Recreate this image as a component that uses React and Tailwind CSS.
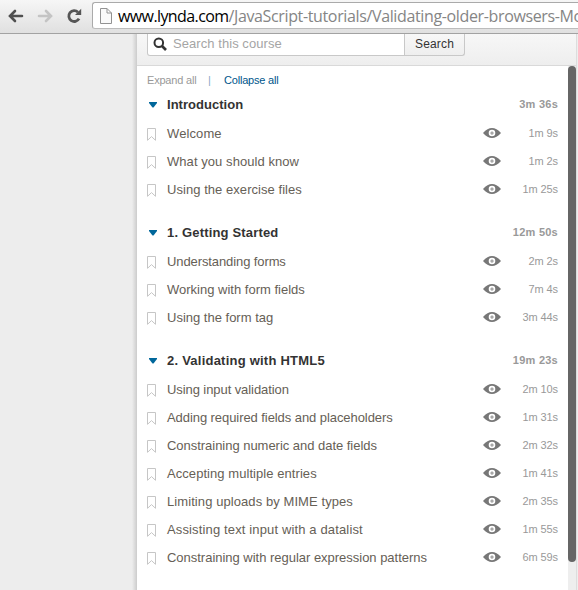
const sections = [
  {
    title: 'Introduction', time: '3m 36s', tracking: 'tracking-[0.03px]',
    items: [
      ['Welcome', '1m 9s', 'tracking-[0.1px]'],
      ['What you should know', '1m 2s', 'tracking-[0.06px]'],
      ['Using the exercise files', '1m 25s', 'tracking-[0.05px]'],
    ],
  },
  {
    title: '1. Getting Started', time: '12m 50s', tracking: 'tracking-[0.17px]',
    items: [
      ['Understanding forms', '2m 2s', 'tracking-[-0.1px]'],
      ['Working with form fields', '7m 4s', 'tracking-[0px]'],
      ['Using the form tag', '3m 44s', 'tracking-[0px]'],
    ],
  },
  {
    title: '2. Validating with HTML5', time: '19m 23s', tracking: 'tracking-[0.23px]',
    items: [
      ['Using input validation', '2m 10s', 'tracking-[-0.08px]'],
      ['Adding required fields and placeholders', '1m 31s', 'tracking-[-0.07px]'],
      ['Constraining numeric and date fields', '2m 32s', 'tracking-[-0.03px]'],
      ['Accepting multiple entries', '1m 41s', 'tracking-[0.06px]'],
      ['Limiting uploads by MIME types', '2m 35s', 'tracking-[0.08px]'],
      ['Assisting text input with a datalist', '1m 55s', 'tracking-[0.14px]'],
      ['Constraining with regular expression patterns', '6m 59s', 'tracking-[-0.02px]'],
    ],
  },
];

function Arrow({ className }) {
  return (
    <svg className={className} width="16" height="14" viewBox="0 0 16 14" fill="none" stroke="currentColor" strokeWidth="2.6" strokeLinecap="round">
      <path d="M7 2 L2 7 L7 12 M2.5 7 H14" />
    </svg>
  );
}

function Reload() {
  return (
    <svg width="16" height="16" viewBox="0 0 16 16" className="ml-[13px] shrink-0 text-[#555]">
      <path d="M12 4.2 A5.4 5.4 0 1 0 13 10.6" fill="none" stroke="currentColor" strokeWidth="2.8" />
      <path d="M15.2 0.8 V7 H9 Z" fill="currentColor" />
    </svg>
  );
}

function Toolbar() {
  return (
    <header className="flex h-[34px] shrink-0 items-start border-b border-[#a2a2a2] bg-gradient-to-b from-[#f6f6f6] to-[#e0e0e0] pl-[8px] pt-[2px]">
      <div className="flex h-[27px] shrink-0 items-center">
        <Arrow className="text-[#505050]" />
        <Arrow className="ml-[13px] rotate-180 text-[#c4c4c4]" />
        <Reload />
      </div>
      <div className="ml-[10px] flex h-[27px] min-w-0 flex-1 items-center overflow-hidden rounded-l-[3px] border border-r-0 border-[#aaa] border-b-[#bcbcbc] bg-white pl-[7px]">
        <svg width="12" height="16" viewBox="0 0 12 16" fill="#fafafa" stroke="#929292" className="shrink-0">
          <path d="M0.5 0.5 H7 L11.5 5 V15.5 H0.5 Z M7 0.5 V5 H11.5" />
        </svg>
        <span className="ml-[6px] whitespace-nowrap font-['Open_Sans',sans-serif] text-[16px] leading-[24px] tracking-[-0.36px] text-[#858585]">
          <span className="tracking-[-0.6px] text-black">www.lynda.com</span>/JavaScript-tutorials/Validating-older-browsers-Mo
        </span>
      </div>
    </header>
  );
}

function SearchHeader() {
  return (
    <div className="flex h-[32px] shrink-0 items-start border-b border-[#d9d9d9] bg-gradient-to-b from-[#f7f7f7] to-[#eeeeee] pl-[10px]">
      <div className="flex h-[22px] w-[258px] items-center rounded-bl-[3px] border border-t-0 border-[#c8c8c8] bg-white pl-[5px]">
        <svg width="14" height="14" viewBox="0 0 14 14" fill="none" stroke="#333" className="mt-[-2px]">
          <circle cx="5.8" cy="5.8" r="4.3" strokeWidth="2" />
          <path d="M9 9 L13 13" strokeWidth="2.6" />
        </svg>
        <span className="ml-[6px] mt-[-2px] text-[13px] leading-[16px] tracking-[0.06px] text-[#a5a5a5]">Search this course</span>
      </div>
      <button className="h-[22px] w-[60px] rounded-br-[3px] border border-l-0 border-t-0 border-[#c8c8c8] bg-gradient-to-b from-[#f8f8f8] to-[#eeeeee] pb-[2px] text-[12px] leading-[16px] tracking-[0.15px] text-[#333]">Search</button>
    </div>
  );
}

function Bookmark() {
  return (
    <svg width="9" height="13" viewBox="0 0 9 13" fill="white" stroke="#c6c6c6" className="mt-[3px] shrink-0">
      <path d="M0.5 0.5 H8.5 V12.3 L4.5 8.6 L0.5 12.3 Z" />
    </svg>
  );
}

function Eye() {
  return (
    <svg width="18" height="10" viewBox="0 0 18 10" className="shrink-0">
      <path d="M0 5 C3 1.4 6 0 9 0 S15 1.4 18 5 C15 8.6 12 10 9 10 S3 8.6 0 5 Z" fill="#777" />
      <circle cx="9" cy="5" r="2.4" fill="#777" stroke="white" strokeWidth="1.8" />
      <circle cx="9" cy="5" r="0.7" fill="white" />
    </svg>
  );
}

function Section({ title, time, tracking, items }) {
  return (
    <section className="mb-[14px]">
      <h2 className="flex h-[30px] items-center">
        <svg width="8" height="6" viewBox="0 0 8 6" className="ml-[2px] mt-[2px]"><path d="M0 0 H8 V1 L4.5 5.5 H3.5 L0 1 Z" fill="#00679b" /></svg>
        <span className={`ml-[10px] flex-1 pt-[2px] text-[13px] font-bold text-[#333] ${tracking}`}>{title}</span>
        <span className="pt-px text-[11px] font-bold tracking-[0.25px] text-[#999]">{time}</span>
      </h2>
      {items.map(([name, length, spacing]) => (
        <div key={name} className="flex h-[28px] items-center">
          <Bookmark />
          <span className={`ml-[11px] flex-1 whitespace-nowrap pt-[2px] text-[13px] text-[#666056] ${spacing}`}>{name}</span>
          <Eye />
          <span className="w-[57px] pt-px text-right text-[11px] tracking-[-0.1px] text-[#999]">{length}</span>
        </div>
      ))}
    </section>
  );
}

export default function App() {
  return (
    <div className="flex h-[590px] w-[578px] flex-col overflow-hidden bg-[#eee] font-['Liberation_Sans',Arial,sans-serif]">
      <Toolbar />
      <div className="flex min-h-0 flex-1">
        <div className="flex w-[137px] shrink-0 justify-end bg-[#ededed]">
          <div className="w-[5px] bg-gradient-to-r from-[#ededed] to-[#cccccc]" />
        </div>
        <main className="flex w-[440px] shrink-0 flex-col border-r border-[#ddd] bg-white">
          <SearchHeader />
          <div className="flex min-h-0 flex-1">
            <div className="w-[421px] shrink-0 pl-[10px]">
              <div className="flex h-[23px] items-center pt-[5px] text-[11px]">
                <span className="w-[61px] tracking-[-0.2px] text-[#999]">Expand all</span>
                <span className="w-[16px] text-[#8ba9c7]">|</span>
                <span className="tracking-[-0.2px] text-[#00568b]">Collapse all</span>
              </div>
              {sections.map((s) => <Section key={s.title} {...s} />)}
            </div>
            <div className="ml-[10px] w-[8px] bg-[#eee]">
              <div className="h-[496px] rounded-full bg-[#666]" />
            </div>
          </div>
        </main>
      </div>
    </div>
  );
}
